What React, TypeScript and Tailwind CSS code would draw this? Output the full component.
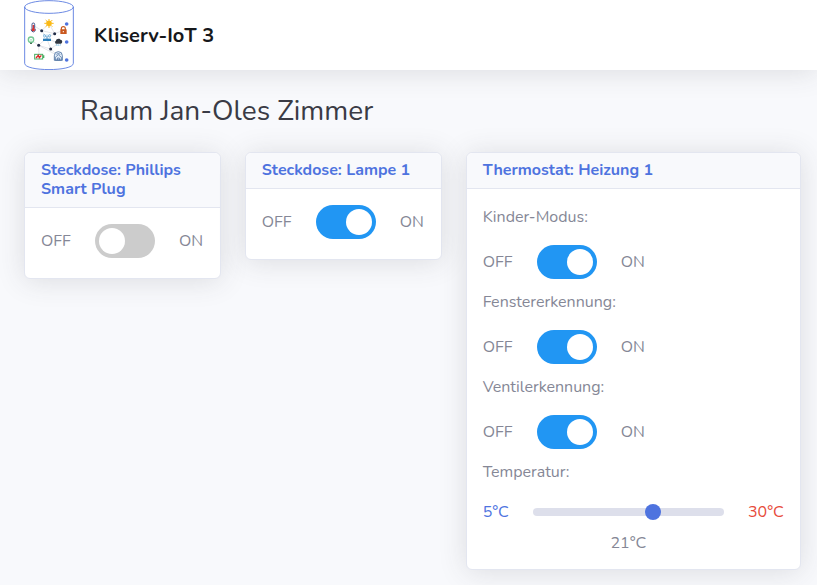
import { useState, type ReactNode } from "react";

function Logo() {
  return (
    <svg viewBox="0 0 150 210" className="h-[70px] w-[50px] shrink-0" fill="none" role="img" aria-label="Kliserv-IoT">
      <g stroke="#5577de" strokeWidth="2.6">
        <ellipse cx="75" cy="21" rx="73" ry="19" />
        <path d="M2 21V190C2 215 148 215 148 190V21" />
      </g>
      <path
        d="M33 79L53 92L75 70M53 92L92 101L75 70M92 101L118 91M92 101L68 114L53 92M44 136L68 114L102 130M21 120L44 136L80 147L102 130M44 136L45 170M44 136L103 168L80 147L68 114"
        stroke="#c9ccd4"
        strokeWidth="1.5"
      />
      <g fill="#202b46">
        <circle cx="53" cy="92" r="4.5" />
        <circle cx="92" cy="101" r="4.5" />
        <circle cx="44" cy="136" r="4.5" />
        <circle cx="80" cy="147" r="4.5" />
      </g>
      <g fill="#4e73df">
        <circle cx="128" cy="72" r="5.5" />
        <circle cx="128" cy="126" r="5.5" />
        <circle cx="128" cy="180" r="5.5" />
      </g>
      {/* sun */}
      <circle cx="75" cy="70" r="8.5" fill="#fbb914" />
      <path d="M75 57v5M75 78v6M61 70h5M84 70h5M65 60l4 4M85 60l-4 4M65 80l4-4M85 80l-4-4" stroke="#fbb914" strokeWidth="3" />
      {/* thermometer */}
      <path d="M24 73a4 4 0 0 1 8 0v12a6 6 0 1 1-8 0z" fill="#f6f7fc" stroke="#46568c" strokeWidth="3" />
      <path d="M28 75v12" stroke="#d83434" strokeWidth="4" />
      <circle cx="28" cy="89" r="5" fill="#d83434" />
      {/* padlock */}
      <path d="M112 90v-4a6 6 0 0 1 12 0v4" stroke="#c9581f" strokeWidth="3.5" />
      <rect x="109" y="88" width="19" height="14" rx="1" fill="#c9581f" />
      <circle cx="118" cy="95" r="2" fill="#fff" />
      {/* light bulb */}
      <circle cx="21" cy="119" r="8" fill="#fff" stroke="#73c893" strokeWidth="4" />
      <path d="M18 117l3 4 3-4M21 121v6" stroke="#73c893" strokeWidth="1.5" />
      <path d="M18 130h6" stroke="#49745a" strokeWidth="4" />
      {/* router */}
      <rect x="57" y="116" width="24" height="7" fill="#297dba" />
      <path d="M61 102q-4 5 0 11M77 102q4 5 0 11M66 104q-3 4 0 7M72 104q3 4 0 7M69 107v10" stroke="#4a98cf" strokeWidth="2.5" />
      {/* rain cloud */}
      <path d="M96 131a5 5 0 0 1 0-9c1-7 12-8 14-2 5-1 7 8 1 11z" fill="#303640" />
      <path d="M98 133l-1 4M103 133l-1 5M109 133l-1 4" stroke="#40a0d8" strokeWidth="2" />
      {/* battery */}
      <rect x="32" y="163" width="24" height="14" fill="#fff" stroke="#47ad61" strokeWidth="3" />
      <path d="M59 166v8" stroke="#47ad61" strokeWidth="4" />
      <path d="M36 174l7-8 3 7 6-7" stroke="#dc2828" strokeWidth="4" />
      {/* smart home */}
      <path d="M91 181v-14a12 12 0 0 1 24 0v14z" fill="#e5effa" stroke="#486e9e" strokeWidth="2.5" />
      <path d="M94 172l9-8 9 8v8H94zM97 163q6-5 12 0M100 180v-6h6v6" stroke="#365f96" strokeWidth="2" />
    </svg>
  );
}

function Card({ title, children }: { title: string; children: ReactNode }) {
  return (
    <section className="rounded-md border border-[#e3e6f0] bg-white shadow-[0_2px_28px_0_rgba(58,59,69,0.15)]">
      <h2 className="rounded-t-md border-b border-[#e3e6f0] bg-[#f8f9fc] px-4 py-2 text-base leading-[19px] font-bold text-[#4e73df]">
        {title}
      </h2>
      <div className="px-4 pt-4 pb-5">{children}</div>
    </section>
  );
}

function Toggle({ label, initial }: { label: string; initial: boolean }) {
  const [on, setOn] = useState(initial);
  return (
    <label className="flex items-center">
      <span className="w-[54px]">OFF</span>
      <input
        type="checkbox"
        aria-label={label}
        checked={on}
        onChange={(e) => setOn(e.target.checked)}
        className="h-[34px] w-[60px] shrink-0 cursor-pointer appearance-none rounded-full bg-[#ccc] p-1 transition-colors before:block before:size-[26px] before:rounded-full before:bg-white before:transition-transform checked:bg-[#2196f3] checked:before:translate-x-[26px]"
      />
      <span className="ml-6">ON</span>
    </label>
  );
}

function Temperature() {
  const [value, setValue] = useState(21);
  return (
    <div>
      <label htmlFor="temperature" className="mb-4 block">
        Temperatur:
      </label>
      <div className="grid grid-cols-[26px_1fr_36px] items-center gap-x-6 gap-y-[7px]">
        <span className="text-[#4e73df]">5°C</span>
        <input
          id="temperature"
          type="range"
          min={5}
          max={30}
          value={value}
          onChange={(e) => setValue(Number(e.target.value))}
          className="h-2 w-full min-w-0 cursor-pointer appearance-none rounded-full bg-[#dddfeb] [&::-webkit-slider-thumb]:size-4 [&::-webkit-slider-thumb]:appearance-none [&::-webkit-slider-thumb]:rounded-full [&::-webkit-slider-thumb]:bg-[#4e73df]"
        />
        <span className="text-[#e74a3b]">30°C</span>
        <output htmlFor="temperature" className="col-start-2 text-center">
          {value}°C
        </output>
      </div>
    </div>
  );
}

export default function App() {
  return (
    <div className="min-h-screen bg-[#f8f9fc] font-[Nunito,Lato,sans-serif] text-base leading-6 text-[#858796]">
      <header className="flex h-[70px] items-center gap-5 bg-white px-6 shadow-[0_2px_28px_0_rgba(58,59,69,0.15)]">
        <Logo />
        <span className="text-xl leading-[29px] font-bold text-[#16181b]">Kliserv-IoT 3</span>
      </header>
      <main className="py-6 pr-4 pl-6">
        <h1 className="mb-6 pl-14 text-[28px] leading-[34px] text-[#3a3b45]">Raum Jan-Oles Zimmer</h1>
        <div className="grid grid-cols-[27fr_27fr_46fr] items-start gap-6">
          <Card title="Steckdose: Phillips Smart Plug">
            <Toggle label="Phillips Smart Plug" initial={false} />
          </Card>
          <Card title="Steckdose: Lampe 1">
            <Toggle label="Lampe 1" initial={true} />
          </Card>
          <Card title="Thermostat: Heizung 1">
            <div className="-mb-1.5 flex flex-col gap-[11px]">
              {["Kinder-Modus:", "Fenstererkennung:", "Ventilerkennung:"].map((name) => (
                <div key={name}>
                  <p className="mb-4">{name}</p>
                  <Toggle label={name} initial={true} />
                </div>
              ))}
              <Temperature />
            </div>
          </Card>
        </div>
      </main>
    </div>
  );
}
